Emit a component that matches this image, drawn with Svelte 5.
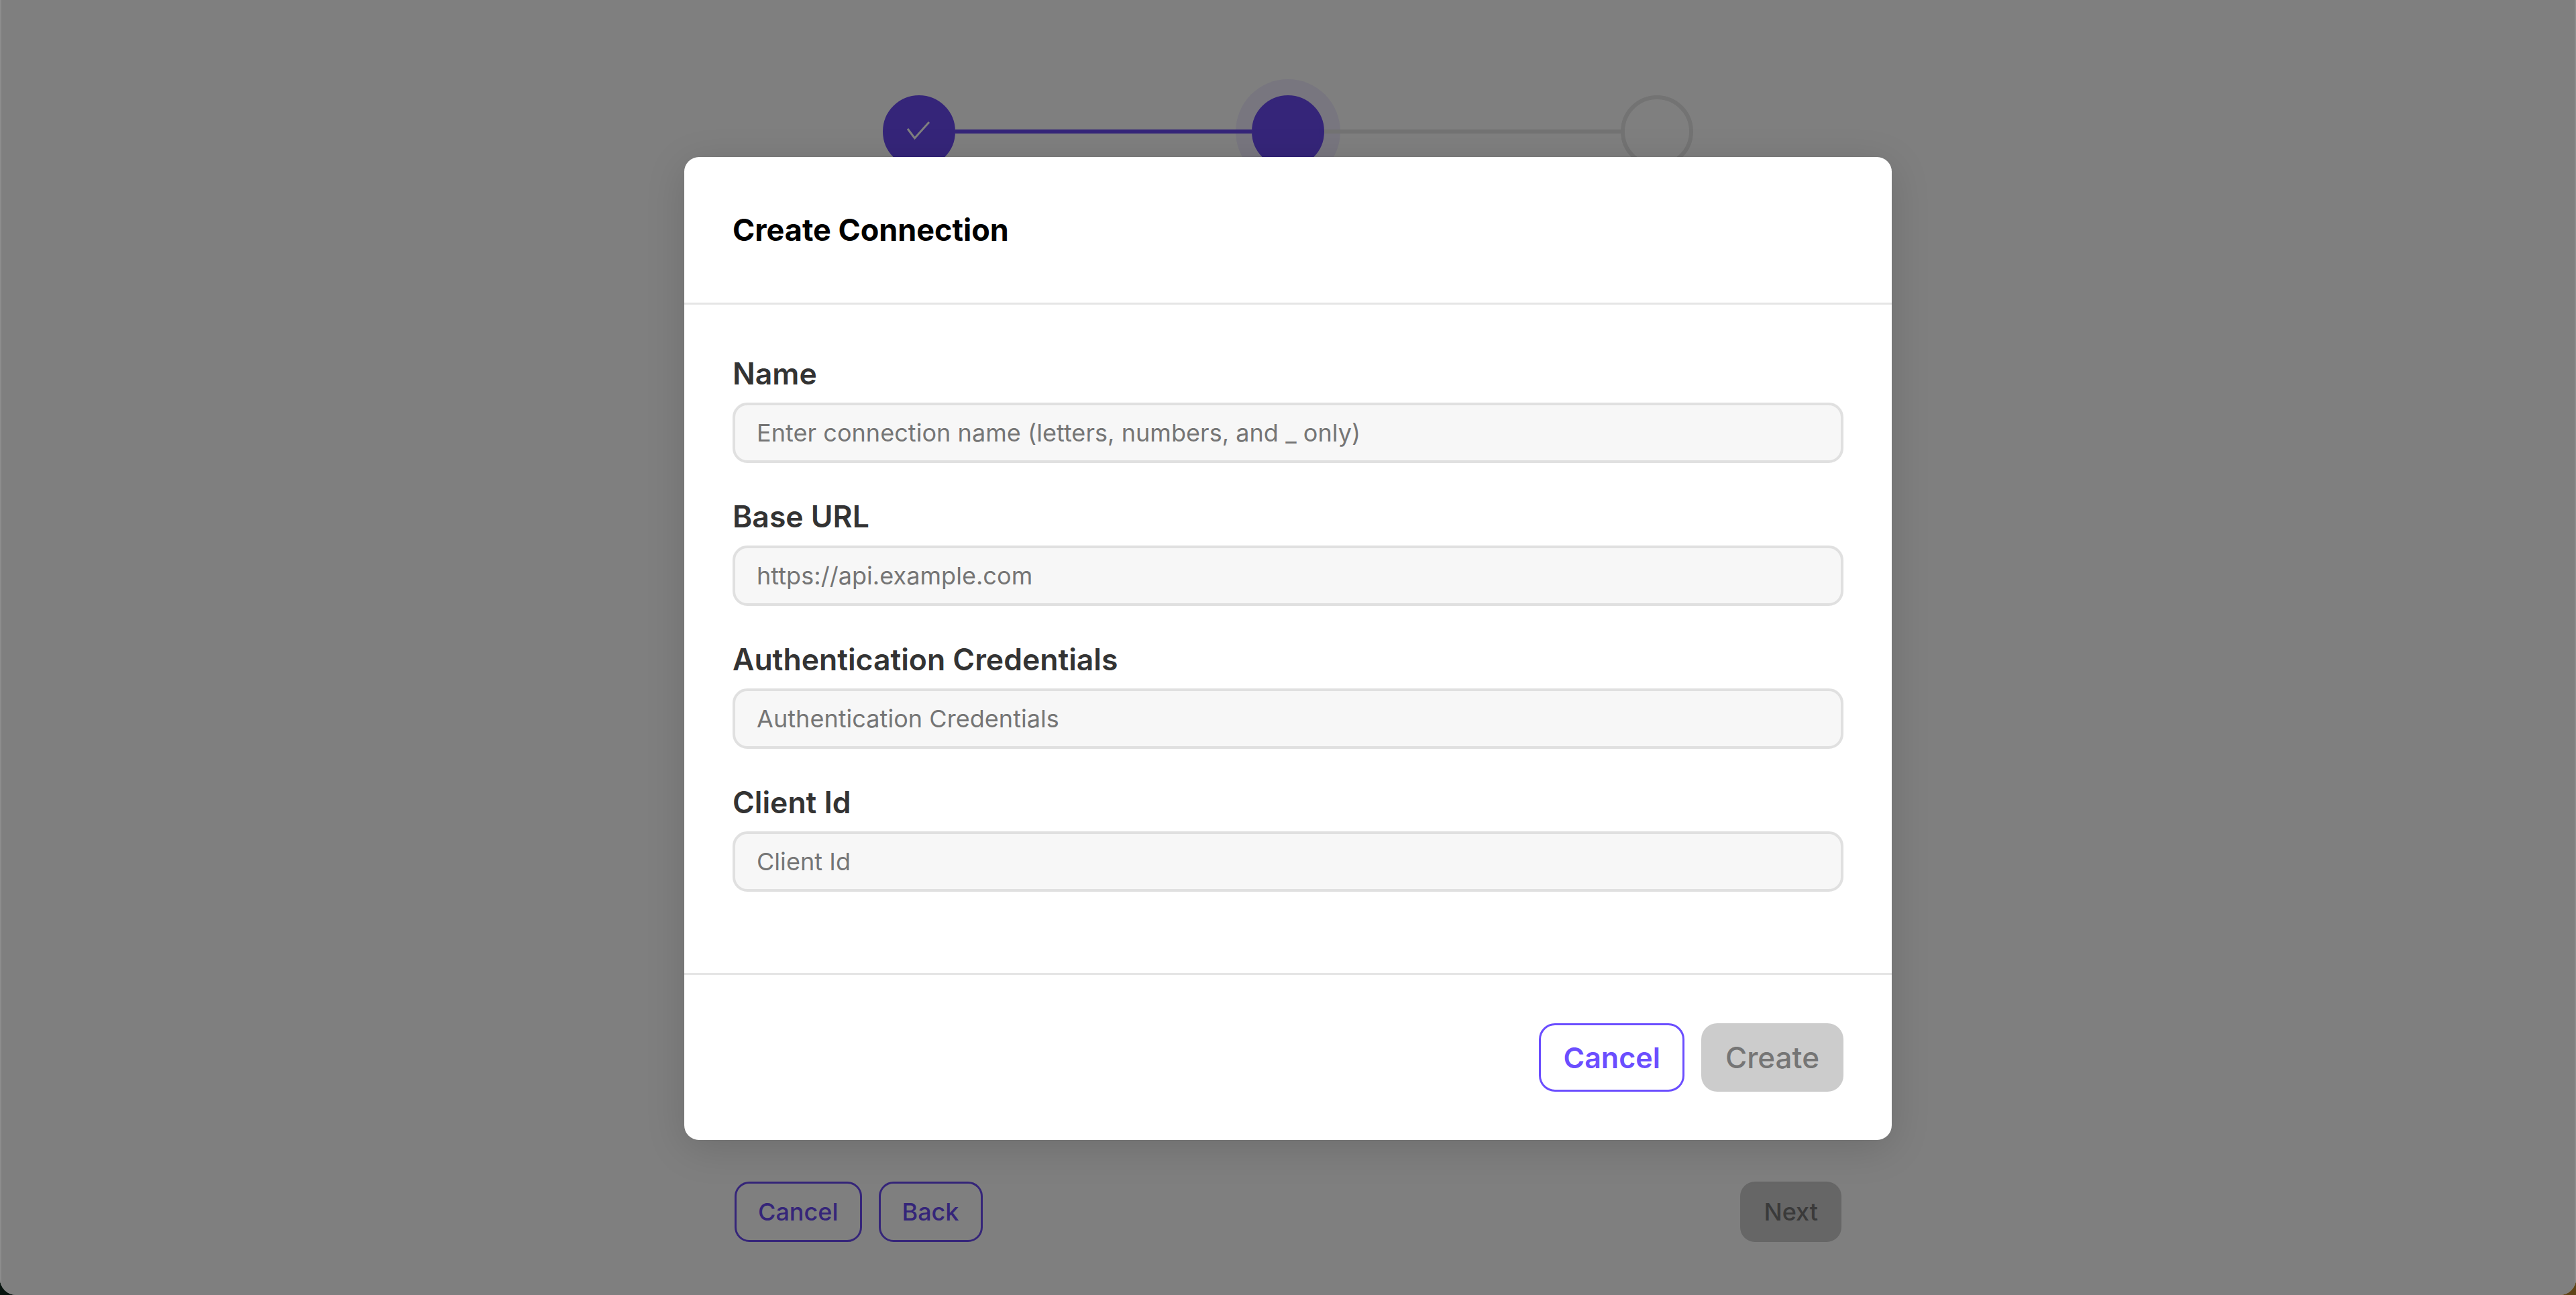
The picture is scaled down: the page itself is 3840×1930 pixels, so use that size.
<script>
  const fields = [
    { label: 'Name', placeholder: 'Enter connection name (letters, numbers, and _ only)' },
    { label: 'Base URL', placeholder: 'https://api.example.com' },
    { label: 'Authentication Credentials', placeholder: 'Authentication Credentials' },
    { label: 'Client Id', placeholder: 'Client Id' }
  ];
</script>

<div class="page">
  <div class="stepper">
    <div class="step done">
      <svg width="44" height="34" viewBox="0 0 44 34" fill="none">
        <polyline points="5,13 15.5,27 37,3" stroke="#fff" stroke-width="3" />
      </svg>
    </div>
    <div class="line active"></div>
    <div class="step current"></div>
    <div class="line"></div>
    <div class="step"></div>
  </div>

  <div class="actions">
    <div class="left">
      <button class="btn outline">Cancel</button>
      <button class="btn outline">Back</button>
    </div>
    <button class="btn disabled">Next</button>
  </div>

  <div class="overlay">
    <div class="modal">
      <header class="modal-head"><h2>Create Connection</h2></header>
      <div class="modal-body">
        {#each fields as f}
          <label class="field">
            <span>{f.label}</span>
            <input type="text" placeholder={f.placeholder} />
          </label>
        {/each}
      </div>
      <footer class="modal-foot">
        <button class="mbtn cancel">Cancel</button>
        <button class="mbtn create">Create</button>
      </footer>
    </div>
  </div>
</div>

<style>
  :global(body) {
    margin: 0;
    background: linear-gradient(to right, #08140f 0%, #08140f 50%, #5f4418 50%, #5f4418 100%);
  }
  .page {
    position: relative;
    width: 3840px;
    height: 1930px;
    box-sizing: border-box;
    display: flex;
    flex-direction: column;
    background: #fff;
    border-radius: 0 0 24px 24px;
    overflow: hidden;
    font-family: Inter, "Liberation Sans", sans-serif;
  }
  .stepper {
    display: flex;
    justify-content: center;
    align-items: center;
    padding-top: 142px;
  }
  .step {
    width: 108px;
    height: 108px;
    box-sizing: border-box;
    border-radius: 50%;
    border: 6px solid #e6e6e6;
    flex: none;
    display: flex;
    align-items: center;
    justify-content: center;
  }
  .step.done, .step.current {
    background: #6a4bf2;
    border-color: #6a4bf2;
  }
  .step.current {
    box-shadow: 0 0 0 24px rgba(107, 78, 255, 0.1);
  }
  .line {
    width: 442px;
    height: 6px;
    background: #e6e6e6;
    flex: none;
    position: relative;
  }
  .line.active { background: #6a4bf2; }
  .actions {
    margin-top: auto;
    padding: 0 1095px 79px 1095px;
    display: flex;
    justify-content: space-between;
  }
  .left { display: flex; gap: 25px; }
  .btn {
    height: 90px;
    box-sizing: border-box;
    padding: 0 32px;
    border-radius: 22px;
    font: 500 36px Inter, sans-serif;
    border: 3px solid transparent;
    background: transparent;
  }
  .btn.outline { border-color: #6a4bf2; color: #6a4bf2; }
  .btn.disabled { background: #ccc; color: #757575; }
  .overlay {
    position: absolute;
    inset: 0;
    padding-top: 2px;
    display: flex;
    align-items: center;
    justify-content: center;
    background: rgba(0, 0, 0, 0.5);
    border-left: 2px solid #8d8d8d;
    border-right: 2px solid #8d8d8d;
  }
  .modal {
    width: 1800px;
    background: #fff;
    border-radius: 22px;
    box-shadow: 0 12px 60px rgba(0, 0, 0, 0.14);
  }
  .modal-head {
    height: 217px;
    padding: 0 72px;
    display: flex;
    align-items: center;
    border-bottom: 3px solid #e5e5e5;
  }
  h2 {
    margin: 0;
    font-size: 45px;
    font-weight: 700;
    color: #000;
  }
  .modal-body {
    padding: 73px 72px 121px;
    display: flex;
    flex-direction: column;
    gap: 50px;
  }
  .field { display: flex; flex-direction: column; gap: 13px; }
  .field span {
    font-size: 44.5px;
    line-height: 60px;
    font-weight: 600;
    color: #333;
  }
  input {
    height: 90px;
    box-sizing: border-box;
    width: 100%;
    padding: 0 32px;
    background: #f7f7f7;
    border: 4px solid #e0e0e0;
    border-radius: 22px;
    font: 400 36px Inter, sans-serif;
    letter-spacing: 0.05px;
    outline: none;
  }
  input::placeholder { color: #757575; opacity: 1; }
  .modal-foot {
    border-top: 3px solid #e5e5e5;
    padding: 72px;
    display: flex;
    justify-content: flex-end;
    gap: 25px;
  }
  .mbtn {
    height: 102px;
    box-sizing: border-box;
    border-radius: 24px;
    font: 600 43px Inter, sans-serif;
    padding: 0 33px;
    border: 3px solid transparent;
  }
  .mbtn.cancel { background: #fff; color: #6b4eff; border-color: #6b4eff; }
  .mbtn.create { background: #ccc; color: #757575; font-weight: 500; font-size: 44px; }
</style>
